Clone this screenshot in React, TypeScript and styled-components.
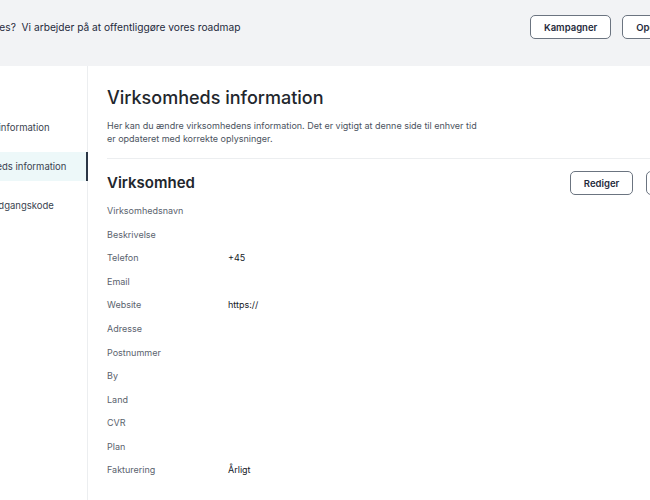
import styled, { createGlobalStyle } from "styled-components";

const GlobalStyle = createGlobalStyle`
  html, body {
    margin: 0;
    padding: 0;
    background: #ffffff;
    overflow: hidden;
  }
  body {
    font-family: "Inter", "Noto Sans", sans-serif;
    color: #1f2937;
  }
`;

const Viewport = styled.div`
  width: 650px;
  height: 500px;
  overflow: hidden;
`;

const Shell = styled.div`
  width: 794px;
  margin-left: -62px;
  display: flex;
  flex-direction: column;
  min-height: 500px;
`;

const TopBar = styled.header`
  height: 66px;
  box-sizing: border-box;
  background: #f2f3f5;
  display: flex;
  align-items: flex-start;
  justify-content: space-between;
  padding: 15px 16px 0 11px;
`;

const Notice = styled.p`
  margin: 0;
  line-height: 24px;
  font-size: 10.2px;
  color: #1f2a3c;
  white-space: pre;
`;

const ButtonGroup = styled.div`
  display: flex;
  gap: ${(p: { gap: number }) => p.gap}px;
`;

const OutlineButton = styled.button`
  height: 24px;
  box-sizing: border-box;
  padding: 0 ${(p: { pad: number }) => p.pad}px;
  border: 1.5px solid #6b7480;
  border-radius: 5px;
  background: #ffffff;
  color: #1f2a3c;
  font-family: inherit;
  font-size: 9.5px;
  font-weight: 600;
  cursor: pointer;
`;

const Body = styled.div`
  flex: 1;
  display: flex;
`;

const Sidebar = styled.nav`
  width: 149px;
  flex-shrink: 0;
  border-right: 1px solid #eceef0;
  padding-top: 47px;
  display: flex;
  flex-direction: column;
  gap: 10px;
`;

const NavItem = styled.a`
  display: block;
  height: 29px;
  line-height: 29px;
  padding-left: 16px;
  font-size: 9.5px;
  color: #3a4350;
  text-decoration: none;
  background: ${(p: { active?: boolean }) => (p.active ? "#edf8f9" : "transparent")};
  border-right: 2px solid
    ${(p: { active?: boolean }) => (p.active ? "#2b3646" : "transparent")};
  margin-right: -1px;
  white-space: nowrap;
`;

const Main = styled.main`
  flex: 1;
  padding: 19px 19px 0 19px;
`;

const Title = styled.h1`
  margin: 0;
  font-size: 18px;
  line-height: 26px;
  font-weight: 500;
  color: #22262c;
`;

const Lead = styled.p`
  margin: 8px 0 0 0;
  max-width: 380px;
  font-size: 9px;
  line-height: 13px;
  color: #4b5360;
`;

const Divider = styled.hr`
  border: none;
  border-top: 1px solid #eceef0;
  margin: 13px 0 0 0;
`;

const SectionHead = styled.div`
  display: flex;
  align-items: center;
  justify-content: space-between;
  margin-top: 12px;
`;

const SectionTitle = styled.h2`
  margin: 0;
  font-size: 15px;
  line-height: 22px;
  font-weight: 600;
  color: #22262c;
`;

const InfoList = styled.dl`
  margin: 4px 0 0 0;
  display: grid;
  grid-template-columns: 121px 1fr;
  grid-auto-rows: 23.55px;
  align-items: center;
`;

const Label = styled.dt`
  font-size: 9px;
  color: #5b636e;
`;

const Value = styled.dd`
  margin: 0;
  font-size: 9px;
  color: #15191f;
`;

const rows: [string, string][] = [
  ["Virksomhedsnavn", ""],
  ["Beskrivelse", ""],
  ["Telefon", "+45"],
  ["Email", ""],
  ["Website", "https://"],
  ["Adresse", ""],
  ["Postnummer", ""],
  ["By", ""],
  ["Land", ""],
  ["CVR", ""],
  ["Plan", ""],
  ["Fakturering", "Årligt"],
];

export default function App() {
  return (
    <>
      <GlobalStyle />
      <Viewport>
        <Shell>
          <TopBar>
            <Notice>{"Nye features?  Vi arbejder på at offentliggøre vores roadmap"}</Notice>
            <ButtonGroup gap={11}>
              <OutlineButton pad={13}>Kampagner</OutlineButton>
              <OutlineButton pad={13}>Opgrader plan</OutlineButton>
            </ButtonGroup>
          </TopBar>
          <Body>
            <Sidebar>
              <NavItem href="#">Personlig information</NavItem>
              <NavItem href="#" active>
                Virksomheds information
              </NavItem>
              <NavItem href="#">Skift din adgangskode</NavItem>
            </Sidebar>
            <Main>
              <Title>Virksomheds information</Title>
              <Lead>
                Her kan du ændre virksomhedens information. Det er vigtigt at
                denne side til enhver tid er opdateret med korrekte oplysninger.
              </Lead>
              <Divider />
              <SectionHead>
                <SectionTitle>Virksomhed</SectionTitle>
                <ButtonGroup gap={13}>
                  <OutlineButton pad={13}>Rediger</OutlineButton>
                  <OutlineButton pad={13}>Annuller</OutlineButton>
                </ButtonGroup>
              </SectionHead>
              <InfoList>
                {rows.map(([label, value]) => (
                  <>
                    <Label key={label}>{label}</Label>
                    <Value key={label + "-v"}>{value}</Value>
                  </>
                ))}
              </InfoList>
            </Main>
          </Body>
        </Shell>
      </Viewport>
    </>
  );
}
